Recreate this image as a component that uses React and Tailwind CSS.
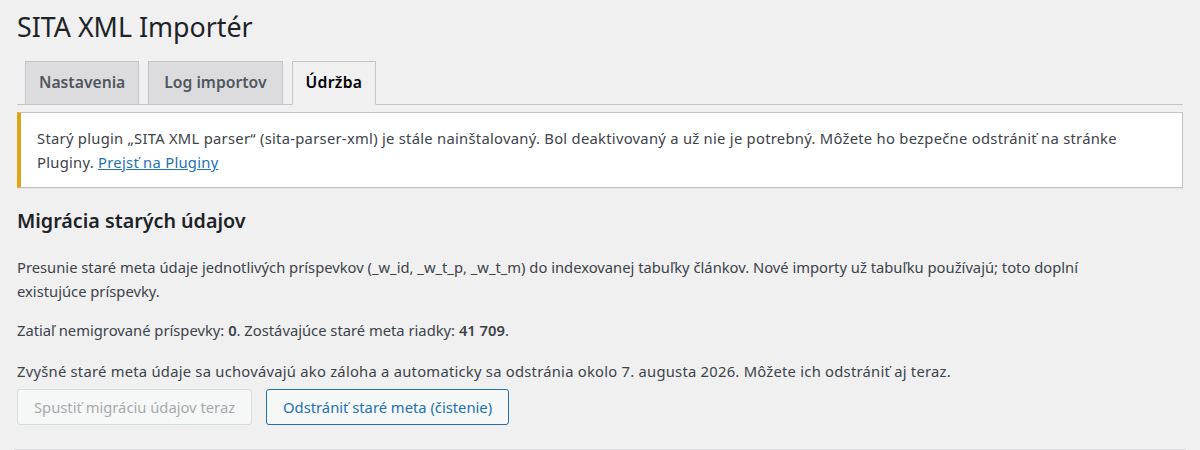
import React from 'react';

const tabs = [
    { label: 'Nastavenia', active: false, pad: 'px-[13px]' },
    { label: 'Log importov', active: false, pad: 'px-[15px]' },
    { label: 'Údržba', active: true, pad: 'px-[13px]' },
];

const App = () => {
    return (
        <div className="min-h-[450px] w-full bg-[#f0f0f1] font-['Noto_Sans',sans-serif] text-[#3c434a]">
            <div className="mx-[14px] border-b border-[#dcdcde] px-[3px] pb-[24px]">
                <h1 className="pt-[10px] text-[26.8px] leading-[33px] font-normal text-[#1d2327]">
                    SITA XML Importér
                </h1>

                {/* tabs */}
                <div className="mt-[18px] flex items-end gap-[9px] border-b border-[#c3c4c7] pl-[8px]">
                    {tabs.map((tab) => (
                        <div
                            key={tab.label}
                            className={
                                tab.active
                                    ? `-mb-px flex h-[44px] items-center border border-[#c3c4c7] border-b-[#f0f0f1] bg-[#f0f0f1] ${tab.pad} text-[15.7px] font-semibold tracking-[0.3px] text-[#000]`
                                    : `flex h-[43px] items-center border border-b-0 border-[#c3c4c7] bg-[#dcdcde] ${tab.pad} text-[15.7px] font-semibold text-[#50575e]`
                            }
                        >
                            {tab.label}
                        </div>
                    ))}
                </div>

                {/* notice */}
                <div className="mt-[7px] border border-l-4 border-[#c3c4c7] border-l-[#dba617] bg-white px-[16px] py-[13px] text-[14.75px] leading-[24px] tracking-[0.28px] text-[#3c434a] shadow-[0_1px_1px_rgba(0,0,0,0.04)]">
                    Starý plugin „SITA XML parser“ (sita-parser-xml) je stále nainštalovaný. Bol deaktivovaný a už nie je potrebný. Môžete ho bezpečne odstrániť na stránke
                    <br />
                    Pluginy.{' '}
                    <a href="#" className="text-[#2271b1] underline">Prejsť na Pluginy</a>
                </div>

                <h2 className="mt-[20px] text-[19.7px] leading-[26px] font-semibold text-[#1d2327]">
                    Migrácia starých údajov
                </h2>

                <p className="mt-[21px] text-[14.75px] leading-[24px]">
                    Presunie staré meta údaje jednotlivých príspevkov (_w_id, _w_t_p, _w_t_m) do indexovanej tabuľky článkov. Nové importy už tabuľku používajú; toto doplní
                    <br />
                    existujúce príspevky.
                </p>

                <p className="mt-[15px] text-[14.75px] leading-[24px]">
                    Zatiaľ nemigrované príspevky: <strong className="font-semibold">0</strong>. Zostávajúce staré meta riadky: <strong className="font-semibold">41 709</strong>.
                </p>

                <p className="mt-[17px] text-[14.75px] leading-[24px] tracking-[0.25px]">
                    Zvyšné staré meta údaje sa uchovávajú ako záloha a automaticky sa odstránia okolo 7. augusta 2026. Môžete ich odstrániť aj teraz.
                </p>

                <div className="mt-[6px] flex gap-[14px]">
                    <button
                        disabled
                        className="h-[36px] rounded-[3px] border border-[#dcdcde] bg-[#f6f7f7] px-[16px] text-[14.75px] text-[#a7aaad]"
                    >
                        Spustiť migráciu údajov teraz
                    </button>
                    <button className="h-[36px] rounded-[3px] border border-[#2271b1] bg-[#f6f7f7] px-[16px] text-[14.75px] text-[#2271b1]">
                        Odstrániť staré meta (čistenie)
                    </button>
                </div>
            </div>
        </div>
    );
};

export default App;
